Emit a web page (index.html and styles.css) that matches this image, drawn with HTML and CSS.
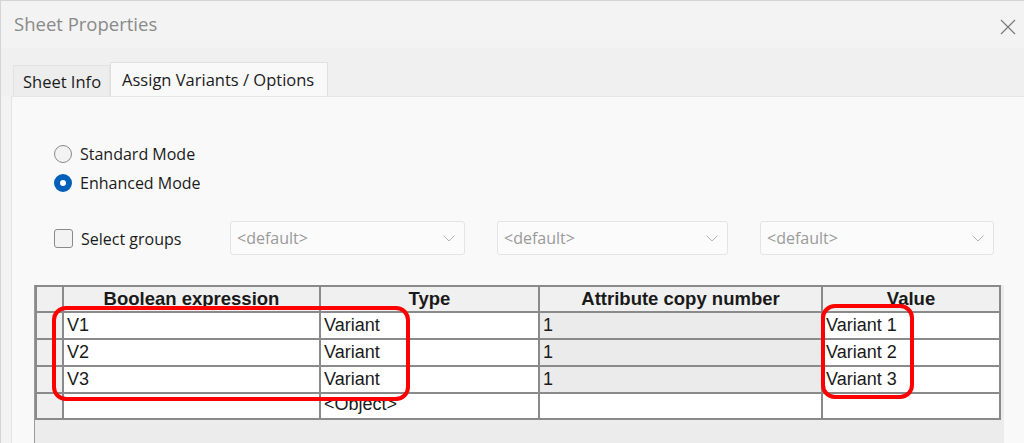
FILE: index.html
```html
<!DOCTYPE html>
<html>
<head>
<meta charset="utf-8">
<link rel="stylesheet" href="styles.css">
</head>
<body>
<div class="window">
  <div class="titlebar">
    <span class="title">Sheet Properties</span>
    <svg class="close" width="16" height="16" viewBox="0 0 16 16"><path d="M1 1 L15 15 M15 1 L1 15" stroke="#7a7a7a" stroke-width="1.2" fill="none"/></svg>
  </div>
  <div class="tabs">
    <div class="tab">Sheet Info</div>
    <div class="tab active">Assign Variants / Options</div>
  </div>
  <div class="panel">
    <div class="modes">
      <label class="opt"><span class="radio"></span>Standard Mode</label>
      <label class="opt"><span class="radio on"></span>Enhanced Mode</label>
    </div>
    <div class="groups">
      <label class="opt"><span class="check"></span>Select groups</label>
      <div class="combo"><span>&lt;default&gt;</span><svg width="12" height="7" viewBox="0 0 12 7"><path d="M0.5 0.5 L6 6 L11.5 0.5" stroke="#b5b5b5" stroke-width="1" fill="none"/></svg></div>
      <div class="combo"><span>&lt;default&gt;</span><svg width="12" height="7" viewBox="0 0 12 7"><path d="M0.5 0.5 L6 6 L11.5 0.5" stroke="#b5b5b5" stroke-width="1" fill="none"/></svg></div>
      <div class="combo"><span>&lt;default&gt;</span><svg width="12" height="7" viewBox="0 0 12 7"><path d="M0.5 0.5 L6 6 L11.5 0.5" stroke="#b5b5b5" stroke-width="1" fill="none"/></svg></div>
    </div>
    <div class="gridwrap">
      <div class="grid">
        <div class="rh"></div><div class="hd">Boolean expression</div><div class="hd">Type</div><div class="hd">Attribute copy number</div><div class="hd">Value</div>
        <div class="rh"></div><div class="c">V1</div><div class="c">Variant</div><div class="c ro">1</div><div class="c">Variant 1</div>
        <div class="rh"></div><div class="c">V2</div><div class="c">Variant</div><div class="c ro">1</div><div class="c">Variant 2</div>
        <div class="rh"></div><div class="c">V3</div><div class="c">Variant</div><div class="c ro">1</div><div class="c">Variant 3</div>
        <div class="rh"></div><div class="c"></div><div class="c obj">&lt;Object&gt;</div><div class="c"></div><div class="c"></div>
      </div>
      <div class="mark m1"></div>
      <div class="mark m2"></div>
    </div>
  </div>
</div>
</body>
</html>
```
FILE: styles.css
```css
html, body { margin: 0; padding: 0; }
body {
  width: 1024px; height: 443px; overflow: hidden;
  background: #f3f3f3;
  font-family: "Open Sans", "Noto Sans", sans-serif;
}
.window {
  width: 1024px; height: 443px;
  display: flex; flex-direction: column;
  border-top: 1px solid #d4d4d4;
  border-left: 1px solid #d4d4d4;
  box-sizing: border-box;
  background: #f3f3f3;
}
.titlebar {
  height: 47px; flex: none;
  display: flex; align-items: center; justify-content: space-between;
  padding: 0 8px 0 13px;
}
.title { font-size: 18.5px; color: #8a8a8a; margin-top: -2px; }
.close { margin-top: 4px; }
.tabs {
  height: 48px; flex: none;
  background: #f0f0f0;
  display: flex; align-items: flex-end;
  padding-left: 12px;
}
.tab {
  height: 31px; box-sizing: border-box;
  padding: 0 8px 0 9px;
  font-size: 16.5px; color: #1b1b1b;
  display: flex; align-items: center;
  border: 1px solid #e3e3e3; border-bottom: none;
  background: #ededed;
}
.tab.active {
  height: 34px;
  background: #f9f9f9;
  padding: 0 13px 0 11px;
  border-color: #e0e0e0;
}
.panel {
  flex: 1;
  margin-left: 10px;
  background: #f9f9f9;
  border-left: 1px solid #e3e3e3;
  border-top: 1px solid #e6e6e6;
  display: flex; flex-direction: column;
  min-height: 0;
}
.modes {
  margin-top: 42px;
  padding-left: 42px;
  display: flex; flex-direction: column;
}
.opt {
  height: 29px;
  display: flex; align-items: center;
  font-size: 16px; color: #1b1b1b;
}
.radio {
  width: 18px; height: 18px; box-sizing: border-box;
  border: 1.5px solid #8a8a8a; border-radius: 50%;
  background: #f3f3f3;
  margin-right: 8px;
}
.radio.on {
  border: 6px solid #005fb8;
  background: #ffffff;
}
.groups {
  margin-top: 24px;
  padding-left: 42px;
  display: grid;
  grid-template-columns: 144px 235px 231px 234px;
  column-gap: 32px;
  height: 34px;
  align-items: stretch;
}
.groups .opt { height: auto; margin-top: 1px; }
.check {
  width: 19px; height: 19px; box-sizing: border-box;
  border: 1.5px solid #8a8a8a; border-radius: 3px;
  background: #f3f3f3;
  margin-right: 8px;
}
.combo {
  border: 1px solid #e4e4e4; border-radius: 3px;
  background: #fbfbfb;
  display: flex; align-items: center; justify-content: space-between;
  padding: 0 9px 0 6px;
  font-size: 16px; color: #9a9a9a;
}
.gridwrap {
  position: relative;
  margin: 30px 0 0 22px;
  width: 969px;
  flex: 1;
  background: #ececec;
  border-left: 1px solid #9a9a9a;
}
.grid {
  display: grid;
  grid-template-columns: 25px 255px 217px 281px 176px;
  grid-template-rows: 24px 25px 25px 25px 24px;
  gap: 2px;
  padding: 2px;
  width: max-content;
  background: #8a8a8a;
  font-family: "Liberation Sans", Arial, sans-serif;
  font-size: 18px; color: #1a1a1a;
}
.rh { background: #f0f0f0; }
.hd {
  background: #f0f0f0;
  font-weight: bold;
  font-size: 18.5px;
  text-align: center;
  line-height: 24px;
}
.c {
  background: #ffffff;
  padding-left: 3px;
  line-height: 25px;
  white-space: nowrap;
}
.c.ro { background: #ebebeb; }
.c.obj { line-height: 21px; }
.mark {
  position: absolute;
  border: 4px solid #ff0000;
  border-radius: 14px;
  box-sizing: border-box;
}
.m1 { left: 17px; top: 21px; width: 358px; height: 95px; }
.m2 { left: 786px; top: 19px; width: 93px; height: 95px; }
```
